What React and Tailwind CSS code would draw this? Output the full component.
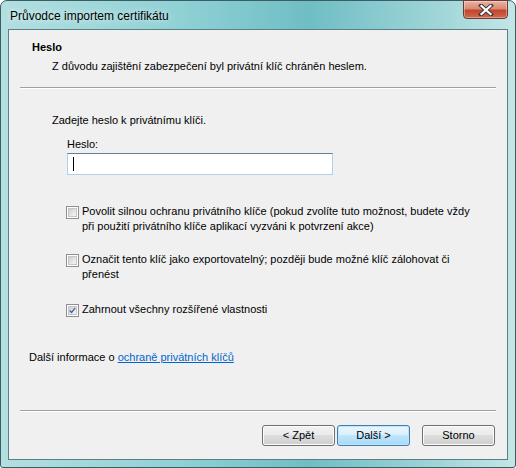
function Checkbox({ checked }) {
  return (
    <div className="w-[13px] h-[13px] shrink-0 border border-[#8e8f8f] bg-white p-[1px] mt-[2px]">
      <div className="w-full h-full border border-[#c4c6c8] bg-[linear-gradient(135deg,#cbcfd5,#f5f6f7)] flex items-center justify-center">
        {checked && (
          <svg width="9" height="9" viewBox="0 0 9 9">
            <path d="M1 4.5 L3.3 7 L8 1" fill="none" stroke="#4a5f97" strokeWidth="1.6" />
          </svg>
        )}
      </div>
    </div>
  )
}

function Button({ children, primary }) {
  return (
    <div
      className={
        'w-[73px] h-[21px] rounded-[3px] border flex items-center justify-center text-[11px] text-black ' +
        (primary
          ? 'border-[#3c7fb1] bg-[linear-gradient(to_bottom,#eaf6fd_0%,#d9f0fc_50%,#bee6fd_50%,#a7d9f5_100%)] shadow-[inset_0_0_0_1px_#c3e3f8]'
          : 'border-[#707070] bg-[linear-gradient(to_bottom,#f2f2f2_0%,#ebebeb_50%,#dddddd_50%,#cfcfcf_100%)] shadow-[inset_0_0_0_1px_#fcfcfc]')
      }
    >
      {children}
    </div>
  )
}

export default function App() {
  return (
    <div
      className="w-[516px] h-[468px] overflow-hidden"
      style={{ fontFamily: '"Liberation Sans", Arial, sans-serif' }}
    >
      <div className="w-[516px] h-[468px] rounded-t-[7px] rounded-b-[3px] border border-[#3c5e62] bg-[linear-gradient(to_right,#b3dfe1,#8fd1d5_35%,#6fbec4_60%,#9fd5d8_85%,#c4e6e7)] flex flex-col">
        {/* title bar */}
        <div className="h-[28px] flex items-start justify-between">
          <div className="pl-[9px] pt-[7px] text-[12px] leading-[16px] text-black [text-shadow:0_0_6px_rgba(255,255,255,0.9)]">
            Průvodce importem certifikátu
          </div>
          <div className="mr-[7px] w-[45px] h-[19px] -mt-[1px] rounded-b-[4px] border border-[#6a3a32] bg-[linear-gradient(to_bottom,#eab2a3_0%,#d98a74_45%,#c4452c_55%,#d1684e_100%)] shadow-[inset_0_0_0_1px_rgba(255,255,255,0.35)] flex items-center justify-center">
            <svg width="16" height="12" viewBox="0 0 16 12">
              <path d="M3 1.5 L13 10.5 M13 1.5 L3 10.5" stroke="#3a3a3a" strokeWidth="4" strokeLinecap="square" />
              <path d="M3.5 2 L12.5 10 M12.5 2 L3.5 10" stroke="#ffffff" strokeWidth="2.2" strokeLinecap="square" />
            </svg>
          </div>
        </div>

        {/* client area */}
        <div className="mx-[7px] h-[431px] border border-[#5b7f83] bg-[#f0f0f0] flex flex-col text-[11px] text-black">
          <div className="mt-[9px] ml-[23px] h-[16px] leading-[16px] font-bold">Heslo</div>
          <div className="mt-[3px] ml-[43px] h-[16px] leading-[16px]">
            Z důvodu zajištění zabezpečení byl privátní klíč chráněn heslem.
          </div>
          <div className="mt-[13px] ml-[11px] w-[476px] h-px bg-[#a0a0a0] border-b border-white box-content" />

          <div className="mt-[23px] ml-[43px] h-[16px] leading-[16px]">Zadejte heslo k privátnímu klíči.</div>
          <div className="mt-[8px] ml-[58px] h-[16px] leading-[16px]">Heslo:</div>
          <div className="mt-[1px] ml-[58px] w-[266px] h-[22px] bg-white border border-[#b4d0e8] border-t-[#5a82a8] flex items-center pl-[5px]">
            <div className="w-px h-[14px] bg-black" />
          </div>

          <div className="mt-[29px] ml-[57px] flex gap-[3px] leading-[15px]">
            <Checkbox />
            <div>
              Povolit silnou ochranu privátního klíče (pokud zvolíte tuto možnost, budete vždy
              <br />
              při použití privátního klíče aplikací vyzváni k potvrzení akce)
            </div>
          </div>
          <div className="mt-[18px] ml-[57px] flex gap-[3px] leading-[15px]">
            <Checkbox />
            <div>
              Označit tento klíč jako exportovatelný; později bude možné klíč zálohovat či
              <br />
              přenést
            </div>
          </div>
          <div className="mt-[20px] ml-[57px] flex gap-[3px] leading-[15px]">
            <Checkbox checked />
            <div>Zahrnout všechny rozšířené vlastnosti</div>
          </div>

          <div className="mt-[32px] ml-[20px] h-[16px] leading-[16px]">
            Další informace o <span className="text-[#0066cc] underline">ochraně privátních klíčů</span>
          </div>

          <div className="mt-[45px] ml-[11px] w-[476px] h-px bg-[#a0a0a0] border-b border-white box-content" />

          <div className="mt-[13px] ml-[253px] flex">
            <Button>&lt; Zpět</Button>
            <div className="ml-[2px]">
              <Button primary>Další &gt;</Button>
            </div>
            <div className="ml-[12px]">
              <Button>Storno</Button>
            </div>
          </div>
        </div>
      </div>
    </div>
  )
}
